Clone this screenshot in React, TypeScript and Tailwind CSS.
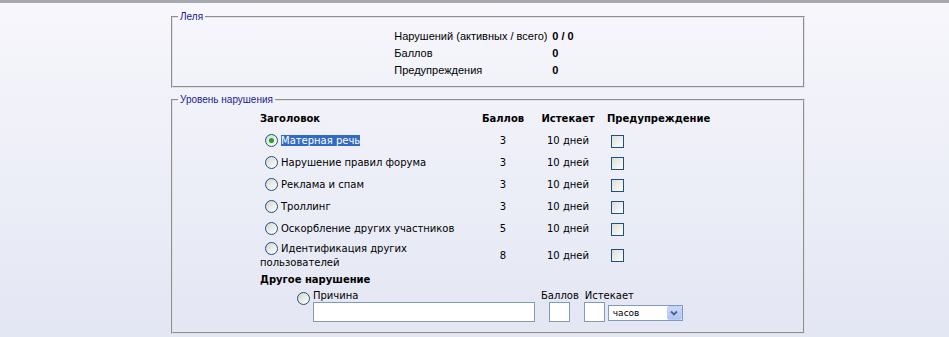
function Radio({ checked }: { checked?: boolean }) {
  return (
    <span className="relative inline-block align-[-3px] w-[13px] h-[13px] rounded-full border border-[#1c5180] bg-linear-to-br from-[#d6d6d0] to-white ml-[5px] mr-[3px]">
      {checked && (
        <span className="absolute left-[3px] top-[3px] w-[5px] h-[5px] rounded-full bg-[#21a121]" />
      )}
    </span>
  );
}

function Checkbox() {
  return (
    <span className="block w-[13px] h-[13px] border border-[#1c5180] bg-linear-to-br from-[#dcdcd7] to-white ml-[4px]" />
  );
}

const rows = [
  { title: "Матерная речь", points: 3, selected: true },
  { title: "Нарушение правил форума", points: 3 },
  { title: "Реклама и спам", points: 3 },
  { title: "Троллинг", points: 3 },
  { title: "Оскорбление других участников", points: 5 },
  { title: "Идентификация других пользователей", points: 8, tall: true },
];

export default function App() {
  return (
    <div className="min-h-screen h-[337px] bg-linear-to-b from-[#f7f7fc] to-[#e3e6f3] text-black font-['DejaVu_Sans',sans-serif] text-[10px]">
      <div className="h-[3px] bg-[#a8a8b0]" />

      <div className="w-[634px] ml-[171px] pt-[8px]">
        {/* Пользователь */}
        <fieldset className="border-2 [border-style:groove] border-[#e2e2e2] pt-[5px] pb-[7px]">
          <legend className="ml-[5px] px-[2px] text-[10px] leading-[12px] text-[#1a1a96] font-['Liberation_Sans',sans-serif]">
            Леля
          </legend>
          <div className="mx-auto w-fit grid grid-cols-[158px_auto] font-['Liberation_Sans',sans-serif] text-[11px] leading-[17px] translate-x-[-4px]">
            <span>Нарушений (активных / всего)</span>
            <span className="font-bold">0 / 0</span>
            <span>Баллов</span>
            <span className="font-bold">0</span>
            <span>Предупреждения</span>
            <span className="font-bold">0</span>
          </div>
        </fieldset>

        {/* Уровень нарушения */}
        <fieldset className="mt-[6px] border-2 [border-style:groove] border-[#e2e2e2] pt-[2px] pb-[10px]">
          <legend className="ml-[5px] px-[2px] text-[10px] leading-[12px] text-[#1a1a96] font-['Liberation_Sans',sans-serif]">
            Уровень нарушения
          </legend>
          <div className="ml-[87px] w-[452px]">
            <div className="grid grid-cols-[215px_56px_74px_107px] leading-[14px]">
              <div className="h-[22px] flex items-center font-bold">Заголовок</div>
              <div className="h-[22px] flex items-center justify-center font-bold">Баллов</div>
              <div className="h-[22px] flex items-center justify-center font-bold">Истекает</div>
              <div className="h-[22px] flex items-center pl-[2px] font-bold">Предупреждение</div>

              {rows.map((r) => {
                const h = r.tall ? "h-[31px]" : "h-[22px]";
                return (
                  <div key={r.title} className="contents">
                    <div className={`${h} flex items-center`}>
                      <div>
                        <Radio checked={r.selected} />
                        {r.selected ? (
                          <span className="bg-[#316ac5] text-white">{r.title}</span>
                        ) : (
                          r.title
                        )}
                      </div>
                    </div>
                    <div className={`${h} flex items-center justify-center`}>{r.points}</div>
                    <div className={`${h} flex items-center justify-center`}>10 дней</div>
                    <div className={`${h} flex items-center pl-[2px]`}>
                      <Checkbox />
                    </div>
                  </div>
                );
              })}
            </div>

            <div className="h-[17px] flex items-center font-bold">Другое нарушение</div>

            <div className="flex items-start ml-[32px] mt-[2px]">
              <span className="mt-[1px]">
                <Radio />
              </span>
              <div className="flex flex-col">
                <span className="leading-[12px]">Причина</span>
                <span className="block w-[222px] h-[20px] border border-[#7f9db9] bg-white" />
              </div>
              <div className="flex flex-col items-center ml-[6px]">
                <span className="leading-[12px]">Баллов</span>
                <span className="block w-[21px] h-[20px] border border-[#7f9db9] bg-white" />
              </div>
              <div className="flex flex-col ml-[5px]">
                <span className="leading-[12px] ml-[1px]">Истекает</span>
                <div className="flex items-center gap-[3px]">
                  <span className="block w-[21px] h-[20px] border border-[#7f9db9] bg-white" />
                  <div className="mt-[2px] w-[75px] h-[16px] border border-[#7f9db9] bg-white flex items-center justify-between">
                    <span className="pl-[4px] text-[9px] leading-[12px]">часов</span>
                    <span className="w-[15px] h-[14px] rounded-[2px] bg-linear-to-b from-[#c9d8fc] to-[#b0c4f3] border border-[#bccff6] flex items-center justify-center">
                      <svg width="8" height="6" viewBox="0 0 8 6">
                        <path d="M1 1.5 L4 4.5 L7 1.5" fill="none" stroke="#4d6185" strokeWidth="1.8" />
                      </svg>
                    </span>
                  </div>
                </div>
              </div>
            </div>
          </div>
        </fieldset>
      </div>
    </div>
  );
}
